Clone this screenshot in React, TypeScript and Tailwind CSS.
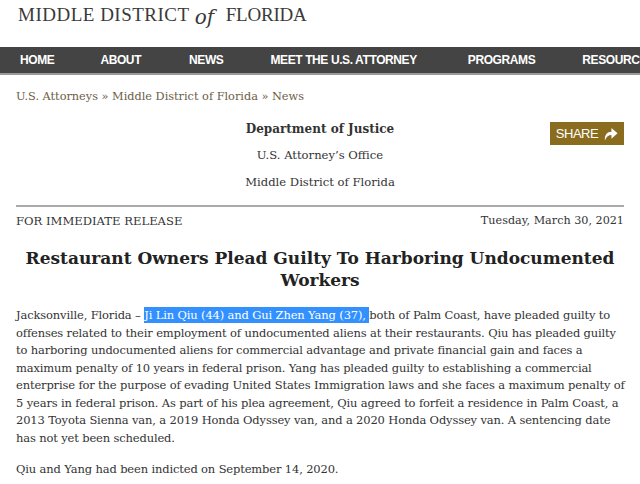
import {FC} from "react";

const serif = "font-['DejaVu_Serif',Georgia,serif]";

const ShareIcon: FC = () => (
  <svg width="15" height="15" viewBox="0 0 16 16" className="ml-[5px]">
    <path d="M2 15.5 C1.5 9 4.5 6 9 6 L9 2 L15.5 7.8 L9 13.5 L9 9.6 C6 9.6 3.6 11.5 2 15.5 Z" fill="#fff" />
  </svg>
);

export default function App() {
  return (
    <div className={`h-[484px] w-[640px] overflow-hidden bg-white text-[#333] ${serif}`}>
      {/* logo */}
      <div className="flex h-[47px] items-start pl-[18px] pt-[1px] font-['Liberation_Serif',serif] text-[19px] text-[#3a3a3a]">
        <span className="tracking-[0.5px]">MIDDLE DISTRICT</span>
        <span className="ml-[5px] mr-[4px] mt-[1px] w-[27px] font-['DejaVu_Serif',serif] text-[20px] italic font-light">of</span>
        <span className="tracking-[-0.2px]">FLORIDA</span>
      </div>

      {/* nav */}
      <div className="flex h-[28px] items-center overflow-hidden whitespace-nowrap border-b-2 border-[#9a9a9a] bg-[#444] font-['Liberation_Sans',Arial,sans-serif] text-[12px] font-bold tracking-[-0.4px] text-white">
        <span className="ml-[20px]">HOME</span>
        <span className="ml-[46px]">ABOUT</span>
        <span className="ml-[48px]">NEWS</span>
        <span className="ml-[47px]">MEET THE U.S. ATTORNEY</span>
        <span className="ml-[51px]">PROGRAMS</span>
        <span className="ml-[47px]">RESOURCES</span>
      </div>

      <div className="px-[16px]">
        <div className="mt-[14px] text-[11.3px] text-[#6b5d45]">
          U.S. Attorneys » Middle District of Florida » News
        </div>

        <div className="relative mt-[14px] flex flex-col items-center text-[11.6px]">
          <div className="h-[27px] text-[12px] font-bold">Department of Justice</div>
          <div className="h-[27px]">U.S. Attorney’s Office</div>
          <div className="h-[27px]">Middle District of Florida</div>
          <div className="absolute right-0 top-[2px] flex h-[23px] w-[74px] items-center justify-center bg-[#8a6c1f] font-['Liberation_Sans',Arial,sans-serif] text-[13px] tracking-[-0.5px] text-white">
            SHARE
            <ShareIcon />
          </div>
        </div>

        <div className="mt-[4px] border-t-2 border-[#aaa]" />

        <div className="mt-[6px] flex justify-between text-[11.6px]">
          <span>FOR IMMEDIATE RELEASE</span>
          <span className="text-[11.2px]">Tuesday, March 30, 2021</span>
        </div>

        <h1 className="mt-[17px] text-center text-[17px] font-bold leading-[22px] text-[#222]">
          Restaurant Owners Plead Guilty To Harboring Undocumented
          <br />
          Workers
        </h1>

        <p className="mt-[16px] whitespace-nowrap text-[11.5px] leading-[17.5px] tracking-[-0.15px]">
          Jacksonville, Florida – <span className="bg-[#3390ff] py-[1px] text-white">Ji Lin Qiu (44) and Gui Zhen Yang (37), </span>both of Palm Coast, have pleaded guilty to
          <br />
          offenses related to their employment of undocumented aliens at their restaurants. Qiu has pleaded guilty
          <br />
          to harboring undocumented aliens for commercial advantage and private financial gain and faces a
          <br />
          maximum penalty of 10 years in federal prison. Yang has pleaded guilty to establishing a commercial
          <br />
          enterprise for the purpose of evading United States Immigration laws and she faces a maximum penalty of
          <br />
          5 years in federal prison. As part of his plea agreement, Qiu agreed to forfeit a residence in Palm Coast, a
          <br />
          2013 Toyota Sienna van, a 2019 Honda Odyssey van, and a 2020 Honda Odyssey van. A sentencing date
          <br />
          has not yet been scheduled.
        </p>

        <p className="mt-[14px] whitespace-nowrap text-[11.5px] leading-[17.5px] tracking-[-0.15px]">
          Qiu and Yang had been indicted on September 14, 2020.
        </p>
      </div>
    </div>
  );
}
